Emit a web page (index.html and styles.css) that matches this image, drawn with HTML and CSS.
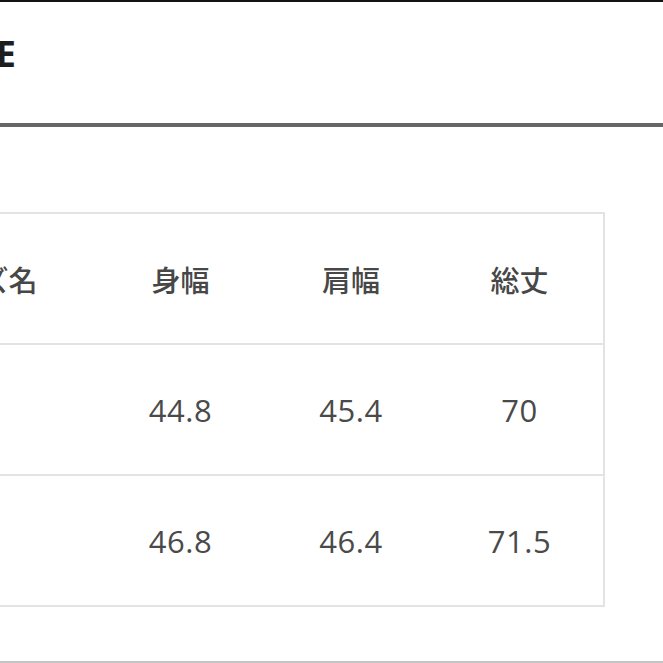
FILE: index.html
```html
<!DOCTYPE html>
<html lang="ja">
<head>
<meta charset="utf-8">
<link rel="stylesheet" href="styles.css">
</head>
<body>
<div class="page">
  <div class="title-bar">
    <div class="title-clip"><span class="title">SIZE</span></div>
  </div>
  <div class="rule"></div>
  <div class="table-area">
    <div class="size-table">
      <div class="row head">
        <div class="cell name">サイズ名</div>
        <div class="cell">身幅</div>
        <div class="cell">肩幅</div>
        <div class="cell">総丈</div>
      </div>
      <div class="row">
        <div class="cell name">M</div>
        <div class="cell num">44.8</div>
        <div class="cell num">45.4</div>
        <div class="cell num">70</div>
      </div>
      <div class="row last">
        <div class="cell name">L</div>
        <div class="cell num">46.8</div>
        <div class="cell num">46.4</div>
        <div class="cell num">71.5</div>
      </div>
    </div>
  </div>
  <div class="bottom-line"></div>
</div>
</body>
</html>
```

FILE: styles.css
```css
html, body {
  margin: 0;
  padding: 0;
  background: #ffffff;
}

.page {
  width: 663px;
  height: 663px;
  overflow: hidden;
  border-top: 2px solid #141414;
  box-sizing: border-box;
  display: flex;
  flex-direction: column;
  font-family: "Noto Sans CJK JP", "Open Sans", sans-serif;
}

.title-bar {
  height: 121px;
  flex: none;
  display: flex;
  align-items: flex-start;
  padding-top: 27px;
  box-sizing: border-box;
}

.title-clip {
  width: 16px;
  display: flex;
  justify-content: flex-end;
}

.title {
  font-family: "Open Sans", sans-serif;
  font-weight: 700;
  font-size: 36px;
  line-height: 50px;
  color: #1e1e1e;
  white-space: nowrap;
}

.rule {
  height: 4px;
  flex: none;
  background: #666666;
}

.table-area {
  flex: none;
  padding-top: 85px;
}

.size-table {
  margin-left: -137px;
  width: 742px;
  border: 2px solid #e3e3e3;
  box-sizing: border-box;
}

.row {
  display: grid;
  grid-template-columns: 230px 171px 170px 167px;
  height: 131px;
  border-bottom: 2px solid #e3e3e3;
  box-sizing: border-box;
}

.row.last {
  border-bottom: none;
  height: 129px;
}

.cell {
  display: flex;
  align-items: center;
  justify-content: center;
  font-size: 29px;
  font-weight: 500;
  color: #474747;
}

.cell.num {
  font-family: "Open Sans", sans-serif;
  font-size: 31px;
  font-weight: 400;
  letter-spacing: 0.5px;
  color: #4a4a4a;
}

.bottom-line {
  margin-top: auto;
  height: 2px;
  background: #c4c4c4;
  flex: none;
}
```
